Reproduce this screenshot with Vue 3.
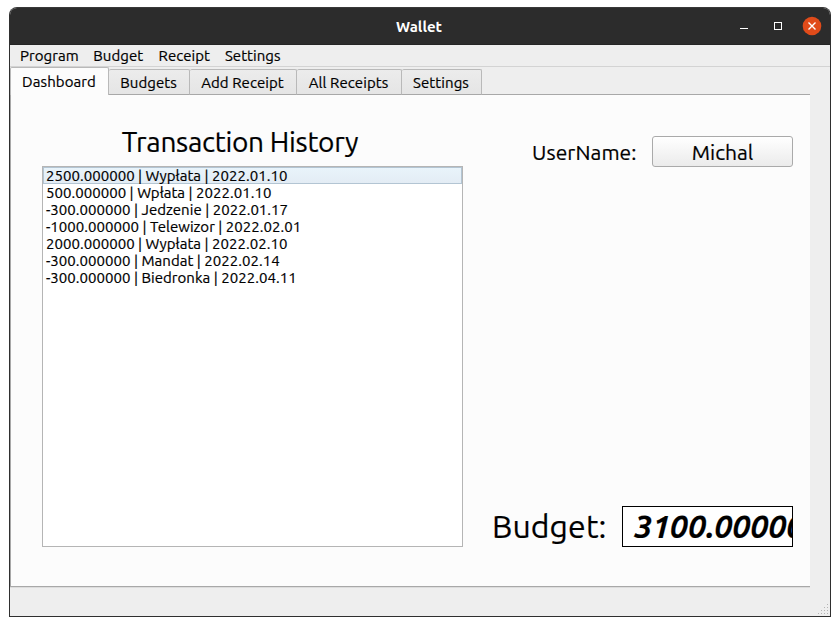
<script setup>
import { ref } from 'vue'

const menus = [
  { label: 'Program', width: 58 },
  { label: 'Budget', width: 50 },
  { label: 'Receipt', width: 51 },
  { label: 'Settings', width: 56 }
]
const tabs = [
  { label: 'Dashboard', width: 99 },
  { label: 'Budgets', width: 81 },
  { label: 'Add Receipt', width: 107 },
  { label: 'All Receipts', width: 105 },
  { label: 'Settings', width: 80 }
]
const active = ref(0)
const selected = ref(0)
const transactions = [
  '2500.000000 | Wypłata | 2022.01.10',
  '500.000000 | Wpłata | 2022.01.10',
  '-300.000000 | Jedzenie | 2022.01.17',
  '-1000.000000 | Telewizor | 2022.02.01',
  '2000.000000 | Wypłata | 2022.02.10',
  '-300.000000 | Mandat | 2022.02.14',
  '-300.000000 | Biedronka | 2022.04.11'
]
</script>

<template>
  <div class="desktop">
    <main class="window">
      <header class="titlebar">
        <span></span>
        <h1>Wallet</h1>
        <svg class="controls" width="91" height="37" viewBox="0 0 91 37">
          <path d="M1 20.5h8" stroke="#fff" />
          <rect x="35.5" y="14.5" width="7" height="7" fill="none" stroke="#fff" />
          <circle cx="73" cy="18" r="9.3" fill="#e04b1a" />
          <path d="M69.5 14.5l7 7m0-7l-7 7" stroke="#fff" stroke-width="1.4" />
        </svg>
      </header>
      <nav class="menubar">
        <span v-for="m in menus" :key="m.label" :style="{ width: m.width + 'px' }">{{ m.label }}</span>
      </nav>
      <nav class="tabs">
        <button
          v-for="(t, i) in tabs"
          :key="t.label"
          :class="{ active: active === i }"
          :style="{ width: t.width + 'px' }"
          @click="active = i"
        >{{ t.label }}</button>
      </nav>
      <section class="pane">
        <div class="history">
          <h2>Transaction History</h2>
          <ul>
            <li
              v-for="(t, i) in transactions"
              :key="t"
              :class="{ selected: selected === i }"
              @click="selected = i"
            >{{ t }}</li>
          </ul>
        </div>
        <div class="side">
          <div class="user">
            <span>UserName:</span>
            <button>Michal</button>
          </div>
          <div class="budget">
            <span>Budget:</span>
            <output>3100.000000</output>
          </div>
        </div>
      </section>
      <footer class="statusbar">
        <svg width="11" height="11" viewBox="0 0 11 11" fill="#b4b4b4">
          <path d="M9 0h1v1h-1zM6 3h1v1h-1zM9 3h1v1h-1zM3 6h1v1h-1zM6 6h1v1h-1zM9 6h1v1h-1zM0 9h1v1h-1zM3 9h1v1h-1zM6 9h1v1h-1zM9 9h1v1h-1z" />
        </svg>
      </footer>
    </main>
  </div>
</template>

<style>
body {
  background: #fff;
}
</style>

<style scoped>
* {
  box-sizing: border-box;
}
.desktop {
  width: 840px;
  height: 626px;
  padding: 7px 9px 9px;
  overflow: hidden;
  font-family: Ubuntu, "Noto Sans", sans-serif;
  font-size: 15px;
  color: #000;
  -webkit-text-stroke: 0.2px currentColor;
}
.window {
  display: flex;
  flex-direction: column;
  width: 822px;
  height: 610px;
  border: 1px solid #2f2f2f;
  border-top-color: #393939;
  border-radius: 8px 8px 0 0;
  background: #eee;
  overflow: hidden;
}
.titlebar {
  display: grid;
  grid-template-columns: 1fr auto 1fr;
  height: 37px;
  flex: none;
  background: #2c2c2c;
  border-bottom: 1px solid #252525;
}
.titlebar h1 {
  margin: 0;
  padding-right: 2px;
  font-size: 15px;
  line-height: 37px;
  color: #fff;
  -webkit-text-stroke: 0;
}
.controls {
  justify-self: end;
}
.menubar {
  display: flex;
  gap: 15.3px;
  height: 22px;
  flex: none;
  padding-left: 10px;
  line-height: 22px;
  letter-spacing: 0.05px;
  border-bottom: 1px solid #d3d3d3;
  white-space: nowrap;
}
.tabs {
  display: flex;
  align-items: flex-end;
  height: 28px;
  flex: none;
  background: linear-gradient(#a8a8a8, #a8a8a8) 0 100% / 800px 1px no-repeat;
}
button {
  font: inherit;
  color: inherit;
  padding: 0;
  white-space: nowrap;
}
.tabs button {
  height: 26px;
  padding-right: 1px;
  border: 1px solid #b9b9b9;
  border-left: 0;
  border-bottom-color: #a8a8a8;
  border-radius: 2px 2px 0 0;
  background: linear-gradient(#ececec, #e5e5e5);
  line-height: 25px;
  letter-spacing: 0.08px;
}
.tabs button.active {
  height: 28px;
  border-left: 1px solid #b9b9b9;
  border-bottom: 0;
  background: #fcfcfc;
  line-height: 27px;
}
.pane {
  display: flex;
  width: 800px;
  height: 492px;
  flex: none;
  padding: 27px 17px 39px 31px;
  border-left: 1px solid #a8a8a8;
  border-bottom: 1px solid #a8a8a8;
  box-shadow: 0 1px #ddd;
  background: #fcfcfc;
}
.history {
  width: 421px;
  display: flex;
  flex-direction: column;
}
.history h2 {
  margin: 0 0 4px;
  padding-right: 25px;
  height: 40px;
  font-size: 28px;
  letter-spacing: -0.3px;
  font-weight: 400;
  line-height: 39px;
  text-align: center;
  white-space: nowrap;
}
.history ul {
  flex: 1;
  margin: 0;
  padding: 0;
  list-style: none;
  border: 1px solid #b5b5b5;
  background: #fff;
}
.history li {
  height: 17px;
  padding-left: 3px;
  line-height: 18px;
  letter-spacing: 0.03px;
  white-space: nowrap;
}
.history li.selected {
  background: linear-gradient(#e9f4fb, #e3ecf4);
  box-shadow: inset 0 0 0 1px #b3c5d3;
}
.side {
  flex: 1;
  display: flex;
  flex-direction: column;
  justify-content: space-between;
  padding: 14px 0 0 29px;
}
.user,
.budget {
  display: flex;
  justify-content: space-between;
  white-space: nowrap;
}
.user {
  padding-left: 40px;
  font-size: 21px;
}
.user span {
  line-height: 33px;
  letter-spacing: 0.1px;
}
.user button {
  width: 141px;
  height: 31px;
  border: 1px solid #aaa;
  border-radius: 3px;
  background: linear-gradient(#fff, #ebebeb);
  line-height: 31px;
}
.budget {
  font-size: 32px;
  line-height: 41px;
}
.budget span {
  letter-spacing: 0.1px;
}
.budget output {
  width: 171px;
  height: 41px;
  padding-left: 11px;
  border: 1px solid #000;
  background: #fff;
  overflow: hidden;
  font-size: 32px;
  line-height: 39px;
  font-style: italic;
  font-weight: 700;
}
.statusbar {
  flex: 1;
  display: flex;
  justify-content: flex-end;
  align-items: flex-end;
  padding: 0 1px 1px;
}
</style>
